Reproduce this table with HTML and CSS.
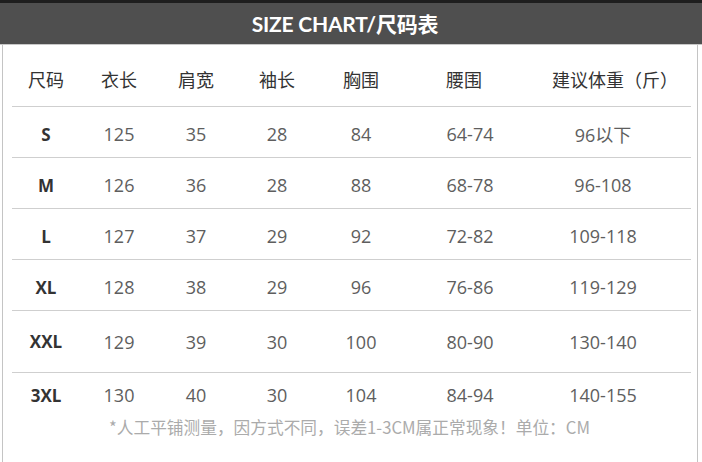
FILE: index.html
```html
<!DOCTYPE html>
<html lang="zh">
<head>
<meta charset="utf-8">
<link rel="stylesheet" href="styles.css">
</head>
<body>
<div class="page">
  <div class="bar">SIZE CHART/尺码表</div>
  <div class="sheet">
    <div class="row head">
      <div>尺码</div><div>衣长</div><div>肩宽</div><div>袖长</div><div>胸围</div><div class="waist">腰围</div><div class="weight">建议体重（斤）</div>
    </div>
    <div class="row">
      <div class="size">S</div><div>125</div><div>35</div><div>28</div><div>84</div><div>64-74</div><div>96以下</div>
    </div>
    <div class="row">
      <div class="size">M</div><div>126</div><div>36</div><div>28</div><div>88</div><div>68-78</div><div>96-108</div>
    </div>
    <div class="row">
      <div class="size">L</div><div>127</div><div>37</div><div>29</div><div>92</div><div>72-82</div><div>109-118</div>
    </div>
    <div class="row">
      <div class="size">XL</div><div>128</div><div>38</div><div>29</div><div>96</div><div>76-86</div><div>119-129</div>
    </div>
    <div class="row tall">
      <div class="size">XXL</div><div>129</div><div>39</div><div>30</div><div>100</div><div>80-90</div><div>130-140</div>
    </div>
    <div class="row last">
      <div class="size">3XL</div><div>130</div><div>40</div><div>30</div><div>104</div><div>84-94</div><div>140-155</div>
    </div>
    <p class="note">*人工平铺测量，因方式不同，误差1-3CM属正常现象！单位：CM</p>
  </div>
</div>
</body>
</html>
```

FILE: styles.css
```css
html, body {
  margin: 0;
  padding: 0;
  background: #fff;
}

.page {
  width: 702px;
  height: 462px;
  overflow: hidden;
  font-family: "Open Sans", "Noto Sans CJK SC", sans-serif;
}

.bar {
  box-sizing: border-box;
  height: 45px;
  border-top: 3px solid #1e1e1e;
  border-bottom: 1px solid #c8c8c8;
  background: #4f4f4f;
  color: #fff;
  font-family: "Lato", "Noto Sans CJK SC", sans-serif;
  font-weight: 700;
  font-size: 21px;
  line-height: 41px;
  text-align: center;
  padding-right: 12px;
  letter-spacing: -0.2px;
}

.sheet {
  box-sizing: border-box;
  height: 417px;
  margin: 0 4px 0 2px;
  border-left: 1px solid #c4c4c4;
  border-right: 1px solid #c4c4c4;
  padding: 0 6px 0 9px;
}

.row {
  box-sizing: border-box;
  display: grid;
  grid-template-columns: 68px 78px 76px 86px 82px 136px 130px 1fr;
  align-items: center;
  height: 51px;
  border-bottom: 1px solid #cfcfcf;
  padding-top: 4px;
  color: #5e5e5e;
  font-size: 18px;
  text-align: center;
}

.row.head {
  height: 62px;
  padding-top: 6px;
  color: #333;
  font-family: "Noto Sans CJK SC", sans-serif;
  font-size: 18px;
}

.head .waist {
  padding-right: 12px;
}

.head .weight {
  padding-left: 14px;
  white-space: nowrap;
}

.row.tall {
  height: 62px;
  padding-top: 0;
}

.row.last {
  border-bottom: none;
  height: 44px;
  padding-top: 0;
}

.size {
  color: #333;
  font-weight: 700;
  font-size: 17px;
}

.note {
  margin: 0;
  text-align: center;
  color: #ababab;
  font-family: "Noto Sans CJK SC", sans-serif;
  font-size: 16.7px;
  line-height: 20px;
  padding-right: 4px;
}
```
